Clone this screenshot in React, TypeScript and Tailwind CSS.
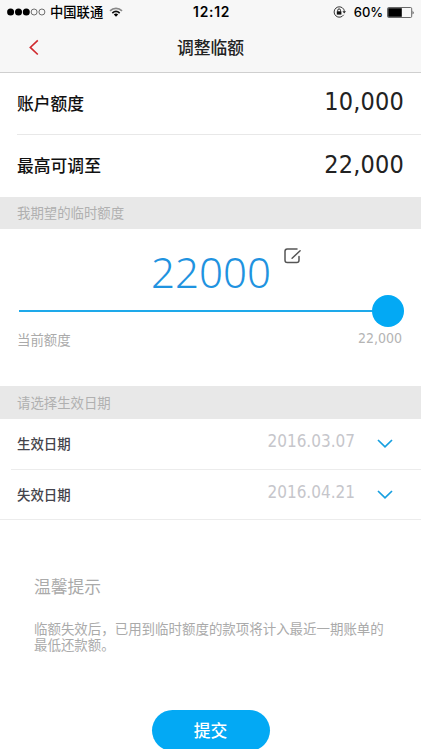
import type { ReactNode } from 'react';

const DIGITS = "font-['DejaVu_Sans_Condensed','DejaVu_Sans',sans-serif] [font-stretch:condensed]";

function StatusBar() {
  return (
    <div className="relative flex h-6 items-center justify-between pl-[7px] pr-[6px] text-black">
      <div className="flex items-center">
        <svg width="39" height="8" viewBox="0 0 39 8">
          <circle cx="3.6" cy="4" r="3.5" />
          <circle cx="11.5" cy="4" r="3.5" />
          <circle cx="19.3" cy="4" r="3.5" />
          <circle cx="27.1" cy="4" r="3" fill="none" stroke="#333" strokeWidth="0.7" />
          <circle cx="34.9" cy="4" r="3" fill="none" stroke="#333" strokeWidth="0.7" />
        </svg>
        <span className="ml-[4px] text-[13.3px] font-medium leading-6">中国联通</span>
        <svg className="ml-[6px]" width="14" height="10" viewBox="0 0 14 10" fill="none" strokeWidth="1.7">
          <path d="M1 3.8C4.4.5 9.6.5 13 3.8" stroke="#888" />
          <path d="M3.3 6.1C5.5 4.1 8.5 4.1 10.7 6.1" stroke="#111" />
          <path d="M4.8 7.4Q7 5.6 9.2 7.4L7 9.7Z" fill="#000" />
        </svg>
      </div>
      <span className="absolute left-[193px] top-0 font-[Inter,sans-serif] text-[13.8px] font-semibold leading-6 tracking-[0.8px]">12:12</span>
      <div className="flex items-center">
        <svg width="14" height="12" viewBox="0 0 14 12" fill="none" stroke="#222">
          <path d="M10.7 3.2A5.2 5.2 0 1 0 10.7 8.8" strokeWidth="0.9" />
          <path d="M10.7 3.2Q11.3 4.3 11.3 5.5" strokeWidth="0.9" />
          <path d="M9.4 5.2h3.6l-1.8 2.2z" fill="#222" stroke="none" />
          <path d="M4.7 5.6V4.3a1.4 1.4 0 0 1 2.8 0v1.3" />
          <rect x="3.8" y="5.3" width="4.6" height="3.3" fill="#111" stroke="none" />
        </svg>
        <span className="ml-[7px] font-[Inter,sans-serif] text-[13px] font-medium leading-6 tracking-[-0.1px]">60%</span>
        <svg className="ml-[4px]" width="28" height="11" viewBox="0 0 28 11">
          <rect x="0.5" y="0.5" width="24.2" height="10" rx="1.2" fill="none" stroke="#444" strokeWidth="0.8" />
          <rect x="1.2" y="1.2" width="13.6" height="8.6" fill="#000" />
          <path d="M25.7 3.5q1.6 2 0 4z" fill="#222" />
        </svg>
      </div>
    </div>
  );
}

function LimitRow({ label, value }: { label: string; value: string }) {
  return (
    <div className="flex h-full items-center justify-between pr-[17px] text-[#111]">
      <span className="text-[16.8px] font-medium">{label}</span>
      <span className={`${DIGITS} pb-[4px] text-[25px] leading-none tracking-[0.2px] text-[#222]`}>{value}</span>
    </div>
  );
}

function SectionTitle({ children }: { children: ReactNode }) {
  return <div className="flex h-full items-center pb-px pl-[17px] text-[13.4px] text-[#b0b0b0]">{children}</div>;
}

function DateRow({ label, value }: { label: string; value: string }) {
  return (
    <div className="flex h-full items-center pb-[2px] pr-[28px]">
      <span className="text-[13.4px] font-medium text-[#44444c]">{label}</span>
      <span className={`${DIGITS} ml-auto pb-[3px] text-[17px] leading-none text-[#c6c6cb]`}>{value}</span>
      <svg className="ml-[22px]" width="16" height="9" viewBox="0 0 16 9" fill="none" stroke="#169fe0" strokeWidth="1.7">
        <path d="M1 1l7 6.8L15 1" />
      </svg>
    </div>
  );
}

export default function App() {
  return (
    <div className="flex h-[750px] w-[421px] flex-col overflow-hidden bg-white font-['Noto_Sans_CJK_SC',sans-serif]">
      <header className="h-[73px] shrink-0 border-b border-[#cfcfcf] bg-[#f7f7f7]">
        <StatusBar />
        <div className="relative flex h-[47px] items-center justify-center">
          <svg className="absolute left-[29px] top-[15px]" width="10" height="17" viewBox="0 0 10 17" fill="none" stroke="#d0292e" strokeWidth="1.6">
            <path d="M8.8 1.3L1.3 8.4l7.5 7.1" />
          </svg>
          <h1 className="text-[16.8px] font-medium text-[#222]">调整临额</h1>
        </div>
      </header>

      <div className="h-[124px] shrink-0 pl-[17px]">
        <div className="h-[62px] border-b border-[#e8e8e8]">
          <LimitRow label="账户额度" value="10,000" />
        </div>
        <div className="h-[62px]">
          <LimitRow label="最高可调至" value="22,000" />
        </div>
      </div>

      <div className="h-8 shrink-0 bg-[#e8e8e8]">
        <SectionTitle>我期望的临时额度</SectionTitle>
      </div>

      <section className="h-[157px] shrink-0">
        <div className="flex h-[66px] pl-[151px] pt-[20px]">
          <span className="w-[120px] whitespace-nowrap font-['Noto_Sans',sans-serif] text-[42px] font-[350] leading-[46px] text-[#1f93e0]">22000</span>
          <svg className="-mt-px ml-[13px]" width="17" height="16" viewBox="0 0 17 16" fill="none" stroke="#555" strokeWidth="1.5" strokeLinecap="round">
            <path d="M13 1H3.3Q1 1 1 3.3v8.9q0 2.3 2.3 2.3h9.4q2.3 0 2.3-2.3V8.5" />
            <path d="M8.1 10.3l8-7.6" />
          </svg>
        </div>
        <div className="-mt-px flex h-[33px] items-center pl-[19px]">
          <div className="h-[2px] w-[354px] bg-[#1ea9ea]" />
          <div className="-ml-px size-8 rounded-full bg-[#03a9f4]" />
        </div>
        <div className="flex h-6 items-center justify-between pl-[17px] pr-[19px] text-[13.4px] text-[#aaa]">
          <span>当前额度</span>
          <span className={`${DIGITS} pb-[2px] text-[14px] leading-none text-[#b4b4b4]`}>22,000</span>
        </div>
      </section>

      <div className="h-[33px] shrink-0 bg-[#e8e8e8]">
        <SectionTitle>请选择生效日期</SectionTitle>
      </div>

      <div className="h-[101px] shrink-0 border-b border-[#ececec]">
        <div className="ml-[11px] h-[51px] border-b border-[#ececec] pl-[6px]">
          <DateRow label="生效日期" value="2016.03.07" />
        </div>
        <div className="h-[50px] pl-[17px]">
          <DateRow label="失效日期" value="2016.04.21" />
        </div>
      </div>

      <section className="h-[190px] shrink-0 px-[34px] pt-[54px] text-[#aaa]">
        <h2 className="text-[16.8px] leading-6">温馨提示</h2>
        <p className="mt-[22px] whitespace-nowrap text-[13.46px] leading-4">
          临额失效后，已用到临时额度的款项将计入最近一期账单的
          <br />
          最低还款额。
        </p>
      </section>

      <div className="flex h-[39px] shrink-0 items-start justify-center overflow-hidden">
        <button className="h-[41px] w-[118px] shrink-0 rounded-full bg-[#03a9f4] text-[16.8px] font-medium text-white">提交</button>
      </div>
    </div>
  );
}
